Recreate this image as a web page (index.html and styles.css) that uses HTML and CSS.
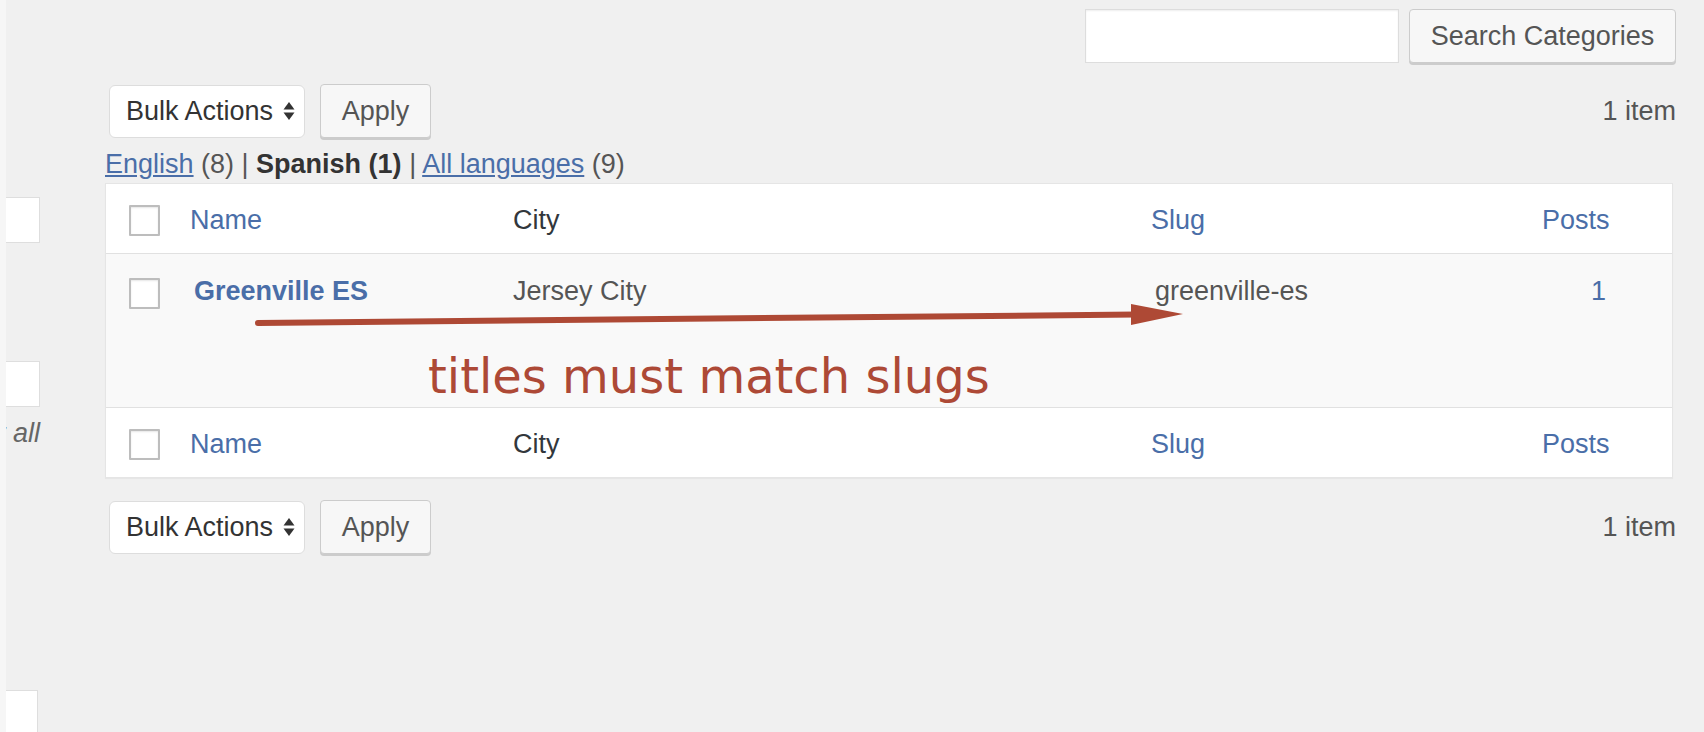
FILE: index.html
```html
<!DOCTYPE html>
<html lang="en">
<head>
<meta charset="utf-8">
<title>Categories</title>
<link rel="stylesheet" href="styles.css">
</head>
<body>
<div class="page">
  <aside class="side">
    <div class="side-inner">
      <span class="side-input f1"></span>
      <span class="side-input f2"></span>
      <p class="side-note">Default for all</p>
      <span class="side-input f3"></span>
    </div>
  </aside>
  <main class="main">
    <div class="search-box">
      <input class="search-input" type="search" aria-label="Search Categories">
      <button class="btn btn-search" type="button">Search Categories</button>
    </div>

    <div class="tablenav">
      <div class="select">
        <span>Bulk Actions</span>
        <svg class="select-arrows" width="12" height="20" viewBox="0 0 12 20"><polygon points="0.5,8.5 6,1 11.5,8.5" fill="#333"/><polygon points="0.5,11.5 11.5,11.5 6,19" fill="#333"/></svg>
      </div>
      <button class="btn btn-apply" type="button">Apply</button>
      <span class="count">1 item</span>
    </div>

    <p class="langs"><a class="link" href="#">English</a> (8) | <strong class="current">Spanish (1)</strong> | <a class="link" href="#">All languages</a> (9)</p>

    <div class="table">
      <div class="row row-head">
        <div class="cell cell-cb"><input class="cb" type="checkbox" aria-label="Select all"></div>
        <div class="cell"><a class="col-link" href="#">Name</a></div>
        <div class="cell col-plain">City</div>
        <div class="cell"><a class="col-link" href="#">Slug</a></div>
        <div class="cell"><a class="col-link" href="#">Posts</a></div>
      </div>
      <div class="row row-body">
        <div class="cell cell-cb"><input class="cb" type="checkbox" aria-label="Select Greenville ES"></div>
        <div class="cell cell-title"><a class="row-title" href="#">Greenville ES</a></div>
        <div class="cell">Jersey City</div>
        <div class="cell cell-slug">greenville-es</div>
        <div class="cell cell-posts"><a class="post-count" href="#">1</a></div>
        <svg class="arrow" viewBox="0 0 1566 153" width="1566" height="153" aria-hidden="true">
          <line x1="152" y1="69" x2="1030" y2="60.5" stroke="#ae4935" stroke-width="6" stroke-linecap="round"/>
          <polygon points="1025,50 1077,60 1025,71" fill="#ae4935"/>
        </svg>
        <div class="note">titles must match slugs</div>
      </div>
      <div class="row row-foot">
        <div class="cell cell-cb"><input class="cb" type="checkbox" aria-label="Select all"></div>
        <div class="cell"><a class="col-link" href="#">Name</a></div>
        <div class="cell col-plain">City</div>
        <div class="cell"><a class="col-link" href="#">Slug</a></div>
        <div class="cell"><a class="col-link" href="#">Posts</a></div>
      </div>
    </div>

    <div class="tablenav tablenav-bottom">
      <div class="select">
        <span>Bulk Actions</span>
        <svg class="select-arrows" width="12" height="20" viewBox="0 0 12 20"><polygon points="0.5,8.5 6,1 11.5,8.5" fill="#333"/><polygon points="0.5,11.5 11.5,11.5 6,19" fill="#333"/></svg>
      </div>
      <button class="btn btn-apply" type="button">Apply</button>
      <span class="count">1 item</span>
    </div>
  </main>
</div>
</body>
</html>
```

FILE: styles.css
```css
html, body {
  margin: 0;
  padding: 0;
}

body {
  background: #f0f0f0;
  font-family: "Liberation Sans", Arial, sans-serif;
  font-size: 27px;
  color: #555;
  overflow: hidden;
}

.page {
  display: flex;
  height: 732px;
}

/* cut-off left column */
.side {
  width: 42px;
  flex-shrink: 0;
  position: relative;
  overflow: hidden;
  display: flex;
  justify-content: flex-end;
  align-items: flex-start;
}

.side::before {
  content: "";
  position: absolute;
  left: 0;
  top: 0;
  bottom: 0;
  width: 6px;
  background: #f6f6f6;
  z-index: 1;
}

.side-inner {
  width: 300px;
  flex-shrink: 0;
  padding-right: 2px;
  display: flex;
  flex-direction: column;
}

.side-input {
  display: block;
  flex-shrink: 0;
  height: 46px;
  box-sizing: border-box;
  background: #fff;
  border: 1px solid #dedede;
}

.f1 { margin-top: 197px; }
.f2 { margin-top: 118px; }
.f3 { margin-top: 241px; height: 60px; margin-right: 2px; }

.side-note {
  flex-shrink: 0;
  margin: 10px 0 0;
  line-height: 32px;
  font-style: italic;
  text-align: right;
  white-space: nowrap;
  color: #666;
}

/* main area */
.main {
  flex: 1;
  margin-left: 63px;
  margin-right: 28px;
}

.search-box {
  display: flex;
  justify-content: flex-end;
  gap: 10px;
  margin-top: 9px;
}

.search-input {
  width: 314px;
  height: 54px;
  box-sizing: border-box;
  margin: 0;
  border: 1px solid #ddd;
  background: #fff;
  box-shadow: inset 0 1px 2px rgba(0, 0, 0, 0.07);
  outline: none;
}

.btn {
  height: 54px;
  box-sizing: border-box;
  margin: 0;
  border: 1px solid #cccccc;
  border-radius: 4px;
  background: #f7f7f7;
  box-shadow: 0 2px 0 #cccccc;
  font: inherit;
  color: #555;
  padding: 0;
  cursor: pointer;
}

.btn-search {
  width: 267px;
}

.btn-apply {
  width: 111px;
  margin-left: 15px;
}

.tablenav {
  display: flex;
  align-items: center;
  height: 56px;
  margin-top: 20px;
}

.tablenav-bottom {
  margin-top: 21px;
}

.select {
  margin-left: 4px;
  width: 196px;
  height: 53px;
  box-sizing: border-box;
  border: 1px solid #ddd;
  border-radius: 6px;
  background: #fff;
  display: flex;
  align-items: center;
  justify-content: space-between;
  padding: 0 9px 0 16px;
  color: #333;
}

.select-arrows {
  display: block;
}

.count {
  margin-left: auto;
  color: #555;
}

.langs {
  margin: 9px 0 0;
  line-height: 32px;
  color: #555;
  white-space: nowrap;
}

.link {
  color: #4a6ea8;
  text-decoration: underline;
}

.current {
  color: #333;
  font-weight: bold;
}

/* list table */
.table {
  margin-top: 3px;
  margin-right: 3px;
  background: #fff;
  border: 1px solid #e5e5e5;
  box-shadow: 0 1px 1px rgba(0, 0, 0, 0.04);
}

.row {
  display: grid;
  grid-template-columns: 84px 323px 638px 391px 1fr;
  line-height: 32px;
}

.row-head {
  padding: 20px 0 17px;
  border-bottom: 1px solid #e1e1e1;
}

.row-body {
  position: relative;
  height: 153px;
  box-sizing: border-box;
  padding-top: 21px;
  background: #f9f9f9;
}

.row-foot {
  padding: 20px 0 17px;
  border-top: 1px solid #e1e1e1;
}

.cell {
  white-space: nowrap;
}

.cell-cb {
  display: flex;
  align-items: center;
  height: 32px;
  padding-left: 23px;
}

.row-body .cell-cb {
  padding-top: 2px;
}

.cb {
  -webkit-appearance: none;
  appearance: none;
  margin: 0;
  width: 31px;
  height: 31px;
  box-sizing: border-box;
  border: 2px solid #bdbdbd;
  border-radius: 1px;
  background: #fff;
  box-shadow: inset 0 1px 2px rgba(0, 0, 0, 0.1);
}

.col-link {
  color: #4a6ea8;
  text-decoration: none;
}

.col-plain {
  color: #32373c;
}

.cell-title {
  padding-left: 4px;
}

.row-title {
  color: #4a6ea8;
  font-weight: bold;
  text-decoration: none;
}

.cell-slug {
  padding-left: 4px;
}

.cell-posts {
  padding-left: 49px;
}

.post-count {
  color: #4a6ea8;
  text-decoration: none;
}

.arrow {
  position: absolute;
  left: 0;
  top: 0;
}

.note {
  position: absolute;
  left: 322px;
  top: 98px;
  font-family: "DejaVu Sans", Verdana, sans-serif;
  font-size: 48px;
  line-height: 48px;
  color: #ad4936;
  white-space: nowrap;
}
```
